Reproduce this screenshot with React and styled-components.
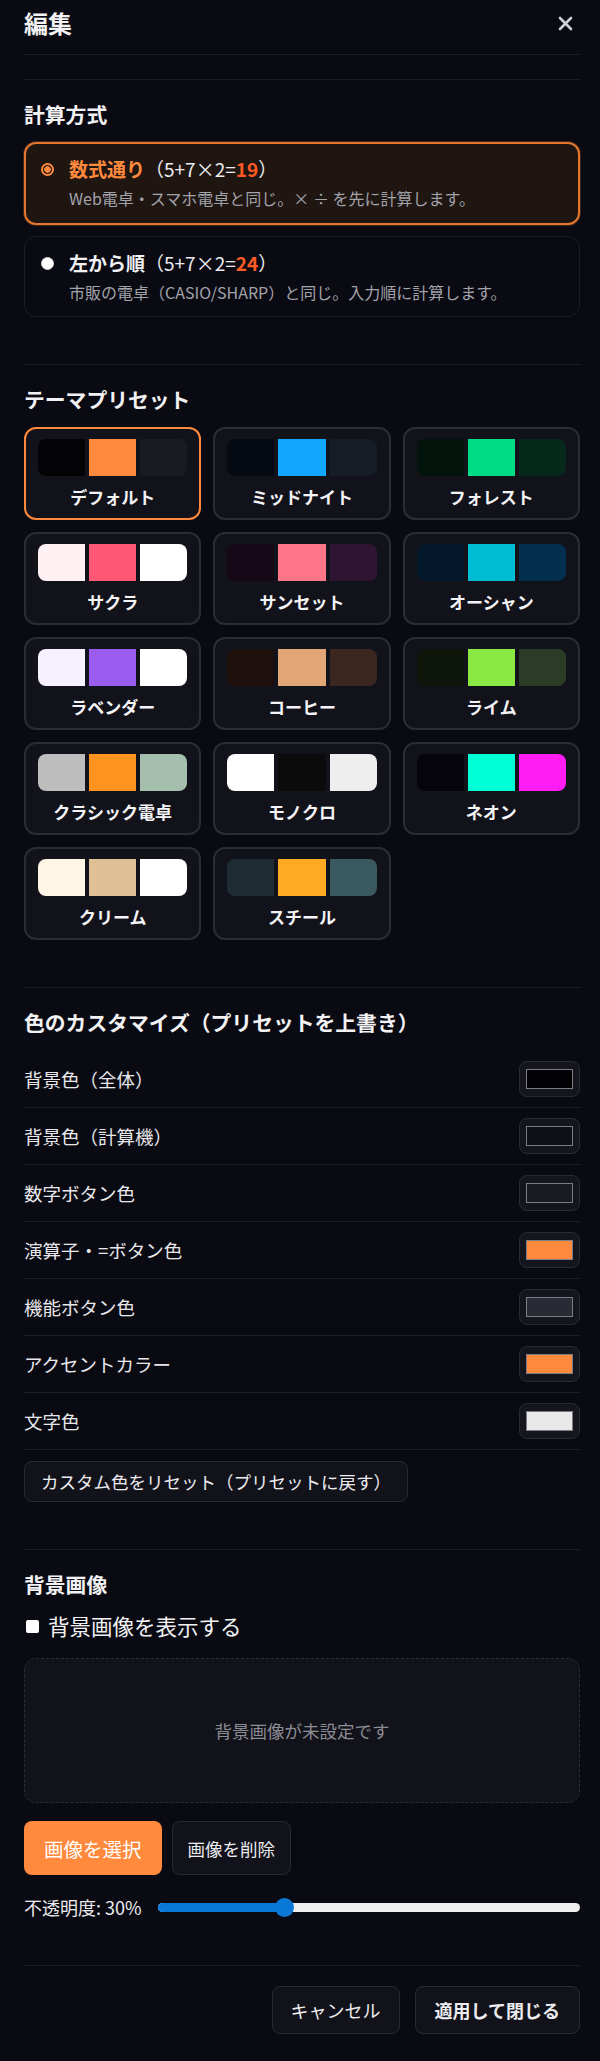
import React from "react";
import styled, { createGlobalStyle, css } from "styled-components";

const Global = createGlobalStyle`
  html, body { margin: 0; padding: 0; background: #0a0a12; }
  body {
    font-family: "Noto Sans CJK JP", "Noto Sans", "DejaVu Sans", sans-serif;
    color: #ececf0;
    -webkit-font-smoothing: antialiased;
  }
  * { box-sizing: border-box; }
`;

const Page = styled.div`
  padding: 0 20px 25px 24px;
  background: #0a0a12;
  min-height: 2061px;
`;

const Header = styled.header`
  display: flex;
  align-items: center;
  justify-content: space-between;
  padding: 8px 0 16px;
  border-bottom: 1px solid #1c1c26;
  margin-bottom: 24px;
`;

const Title = styled.h1`
  margin: 0;
  font-size: 24px;
  line-height: 30px;
  font-weight: 700;
  color: #f2f2f5;
`;

const CloseBtn = styled.button`
  display: flex;
  align-items: center;
  justify-content: center;
  width: 24px;
  height: 24px;
  padding: 0;
  margin-right: 3px;
  border: none;
  background: transparent;
  color: #cfcfd6;
`;

const Section = styled.section`
  border-top: 1px solid #1c1c26;
  padding: 20px 0 24px;
  margin-bottom: 23px;
`;

const SectionTitle = styled.h2`
  margin: 0 0 ${(p) => p.$mb ?? 14}px;
  font-size: 20.8px;
  line-height: 28px;
  font-weight: 700;
  color: #f2f2f5;
`;

const ModeList = styled.div`
  display: flex;
  flex-direction: column;
  gap: 11px;
`;

const ModeCard = styled.label`
  display: flex;
  align-items: flex-start;
  gap: 15px;
  border-radius: 12px;
  ${(p) =>
    p.$active
      ? css`
          border: 2px solid #e2762f;
          background: #1f1612;
          padding: 12px 16px 14px 15px;
          box-shadow: 0 0 0 1px rgba(226, 118, 47, 0.25);
        `
      : css`
          border: 1px solid #1d1d27;
          background: #0a0a12;
          padding: 13px 16px 13px 16px;
        `}
`;

const Radio = styled.span`
  flex: none;
  width: 13px;
  height: 13px;
  margin-top: 7px;
  border-radius: 50%;
  ${(p) =>
    p.$checked
      ? css`
          border: 2px solid #ff8a3d;
          background: radial-gradient(circle, #ff8a3d 0 3px, #1f1612 3.5px);
        `
      : css`
          background: #ffffff;
          border: 1px solid #d8d8d8;
        `}
`;

const ModeText = styled.div`
  display: flex;
  flex-direction: column;
  gap: 5px;
`;

const ModeTitle = styled.div`
  font-size: 19px;
  line-height: 26px;
  color: #ececf0;
`;

const ModeName = styled.span`
  font-weight: 700;
  color: ${(p) => (p.$active ? "#ff8a3d" : "#f2f2f5")};
`;

const Result = styled.span`
  font-weight: 700;
  color: #ff5a24;
`;

const ModeDesc = styled.div`
  font-size: 16px;
  line-height: 22px;
  color: #a3a3ab;
`;

const PresetGrid = styled.div`
  display: grid;
  grid-template-columns: repeat(3, 1fr);
  gap: 12px;
`;

const PresetCard = styled.button`
  display: flex;
  flex-direction: column;
  align-items: stretch;
  height: 93px;
  padding: 10px 12px 9px;
  border-radius: 12px;
  border: 2px solid ${(p) => (p.$active ? "#ff8a3d" : "#2c2c35")};
  background: #12121a;
  font-family: inherit;
  cursor: pointer;
`;

const SwatchRow = styled.div`
  display: flex;
  gap: 4px;
  height: 37px;
  border-radius: 8px;
  overflow: hidden;
`;

const Swatch = styled.span`
  flex: 1;
  background: ${(p) => p.$c};
`;

const PresetName = styled.span`
  margin-top: 9px;
  font-size: 17px;
  line-height: 23px;
  font-weight: 700;
  color: #f4f4f7;
  text-align: center;
`;

const ColorRow = styled.div`
  display: flex;
  align-items: center;
  justify-content: space-between;
  padding: 10px 0;
  border-bottom: 1px solid #1e1e28;
`;

const ColorLabel = styled.span`
  font-size: 18.5px;
  line-height: 26px;
  color: #e8e8ec;
`;

const ColorBox = styled.span`
  display: flex;
  width: 61px;
  height: 36px;
  padding: 7px 6px;
  border-radius: 8px;
  border: 1px solid #2a2a34;
  background: #15151d;
`;

const ColorFill = styled.span`
  flex: 1;
  border: 1px solid #7c7c84;
  background: ${(p) => p.$c};
`;

const GhostButton = styled.button`
  display: inline-flex;
  align-items: center;
  justify-content: center;
  height: ${(p) => p.$h || 41}px;
  padding: 0 ${(p) => p.$px || 16}px;
  border-radius: 8px;
  border: 1px solid #2a2a34;
  background: #12121a;
  color: #ececf0;
  font-family: inherit;
  font-size: ${(p) => p.$fs || 17.5}px;
  font-weight: ${(p) => (p.$bold ? 700 : 400)};
  cursor: pointer;
`;

const ResetWrap = styled.div`
  margin-top: 11px;
`;

const CheckRow = styled.label`
  display: flex;
  align-items: center;
  gap: 9px;
  margin-top: 13px;
  font-size: 21.5px;
  line-height: 30px;
  color: #f2f2f5;
`;

const CheckBox = styled.span`
  width: 13px;
  height: 13px;
  margin-left: 2px;
  border-radius: 2px;
  background: #ffffff;
`;

const DropZone = styled.div`
  display: flex;
  align-items: center;
  justify-content: center;
  height: 145px;
  margin-top: 17px;
  border: 1px dashed #2c2c36;
  border-radius: 12px;
  background: #12121a;
  font-size: 17.5px;
  color: #8c8c94;
`;

const ButtonRow = styled.div`
  display: flex;
  gap: 10px;
  margin-top: 18px;
`;

const PrimaryButton = styled.button`
  display: inline-flex;
  align-items: center;
  justify-content: center;
  height: 54px;
  padding: 0 20px;
  border: none;
  border-radius: 8px;
  background: #ff8a3d;
  color: #ffffff;
  font-family: inherit;
  font-size: 19.5px;
  cursor: pointer;
`;

const SliderRow = styled.div`
  display: flex;
  align-items: center;
  gap: 16px;
  margin-top: 21px;
  height: 22px;
`;

const SliderLabel = styled.span`
  font-size: 18px;
  line-height: 22px;
  color: #ececf0;
  white-space: nowrap;
`;

const Track = styled.div`
  position: relative;
  flex: 1;
  height: 9px;
  border-radius: 5px;
  background: #efefef;
`;

const TrackFill = styled.div`
  height: 100%;
  border-radius: 5px 0 0 5px;
  background: #0a78d6;
`;

const Thumb = styled.div`
  position: absolute;
  top: 50%;
  width: 19px;
  height: 19px;
  margin: -9.5px 0 0 -9.5px;
  border-radius: 50%;
  background: #0a78d6;
`;

const Footer = styled.footer`
  display: flex;
  justify-content: flex-end;
  gap: 15px;
  padding-top: 20px;
  border-top: 1px solid #1c1c26;
`;

const presets = [
  { name: "デフォルト", c: ["#040407", "#ff8a3d", "#1a1a22"], active: true },
  { name: "ミッドナイト", c: ["#050a12", "#12a6ff", "#161d26"] },
  { name: "フォレスト", c: ["#03140c", "#00dc85", "#06291c"] },
  { name: "サクラ", c: ["#fff0f3", "#ff5877", "#ffffff"] },
  { name: "サンセット", c: ["#170818", "#ff7688", "#301433"] },
  { name: "オーシャン", c: ["#03172a", "#00bcd4", "#03304f"] },
  { name: "ラベンダー", c: ["#f6f0ff", "#9b5cf0", "#ffffff"] },
  { name: "コーヒー", c: ["#1c0f0c", "#e2a676", "#3b2620"] },
  { name: "ライム", c: ["#0e160c", "#8ae842", "#2b3b25"] },
  { name: "クラシック電卓", c: ["#bdbdbd", "#ff9320", "#a5bfae"] },
  { name: "モノクロ", c: ["#ffffff", "#0b0b0b", "#eeeeee"] },
  { name: "ネオン", c: ["#05030c", "#00ffd5", "#ff1cf5"] },
  { name: "クリーム", c: ["#fff5e6", "#e0c196", "#ffffff"] },
  { name: "スチール", c: ["#1f2c33", "#ffaa22", "#3a5860"] },
];

const colors = [
  { label: "背景色（全体）", c: "#030305" },
  { label: "背景色（計算機）", c: "#101018" },
  { label: "数字ボタン色", c: "#1a1a22" },
  { label: "演算子・=ボタン色", c: "#ff8a3d" },
  { label: "機能ボタン色", c: "#2a2a34" },
  { label: "アクセントカラー", c: "#ff8a3d" },
  { label: "文字色", c: "#e8e8e8" },
];

function Slider({ value }) {
  return (
    <Track>
      <TrackFill style={{ width: `${value}%` }} />
      <Thumb style={{ left: `${value}%` }} />
    </Track>
  );
}

export default function App() {
  return (
    <>
      <Global />
      <Page>
        <Header>
          <Title>編集</Title>
          <CloseBtn aria-label="閉じる">
            <svg width="15" height="15" viewBox="0 0 15 15">
              <path d="M2 2 L13 13 M13 2 L2 13" stroke="currentColor" strokeWidth="2.6" strokeLinecap="round" />
            </svg>
          </CloseBtn>
        </Header>

        <Section>
          <SectionTitle>計算方式</SectionTitle>
          <ModeList>
            <ModeCard $active>
              <Radio $checked />
              <ModeText>
                <ModeTitle>
                  <ModeName $active>数式通り</ModeName>（5+7×2=<Result>19</Result>）
                </ModeTitle>
                <ModeDesc>Web電卓・スマホ電卓と同じ。× ÷ を先に計算します。</ModeDesc>
              </ModeText>
            </ModeCard>
            <ModeCard>
              <Radio />
              <ModeText>
                <ModeTitle>
                  <ModeName>左から順</ModeName>（5+7×2=<Result>24</Result>）
                </ModeTitle>
                <ModeDesc>市販の電卓（CASIO/SHARP）と同じ。入力順に計算します。</ModeDesc>
              </ModeText>
            </ModeCard>
          </ModeList>
        </Section>

        <Section>
          <SectionTitle>テーマプリセット</SectionTitle>
          <PresetGrid>
            {presets.map((p) => (
              <PresetCard key={p.name} $active={p.active}>
                <SwatchRow>
                  {p.c.map((c, i) => (
                    <Swatch key={i} $c={c} />
                  ))}
                </SwatchRow>
                <PresetName>{p.name}</PresetName>
              </PresetCard>
            ))}
          </PresetGrid>
        </Section>

        <Section>
          <SectionTitle $mb={15}>色のカスタマイズ（プリセットを上書き）</SectionTitle>
          {colors.map((r) => (
            <ColorRow key={r.label}>
              <ColorLabel>{r.label}</ColorLabel>
              <ColorBox>
                <ColorFill $c={r.c} />
              </ColorBox>
            </ColorRow>
          ))}
          <ResetWrap>
            <GhostButton>カスタム色をリセット（プリセットに戻す）</GhostButton>
          </ResetWrap>
        </Section>

        <Section>
          <SectionTitle $mb={0}>背景画像</SectionTitle>
          <CheckRow>
            <CheckBox />
            背景画像を表示する
          </CheckRow>
          <DropZone>背景画像が未設定です</DropZone>
          <ButtonRow>
            <PrimaryButton>画像を選択</PrimaryButton>
            <GhostButton $h={54} $px={15}>画像を削除</GhostButton>
          </ButtonRow>
          <SliderRow>
            <SliderLabel>不透明度: 30%</SliderLabel>
            <Slider value={30} />
          </SliderRow>
        </Section>

        <Footer>
          <GhostButton $h={48} $px={18} $fs={18}>キャンセル</GhostButton>
          <GhostButton $h={48} $px={19} $fs={18} $bold>適用して閉じる</GhostButton>
        </Footer>
      </Page>
    </>
  );
}
